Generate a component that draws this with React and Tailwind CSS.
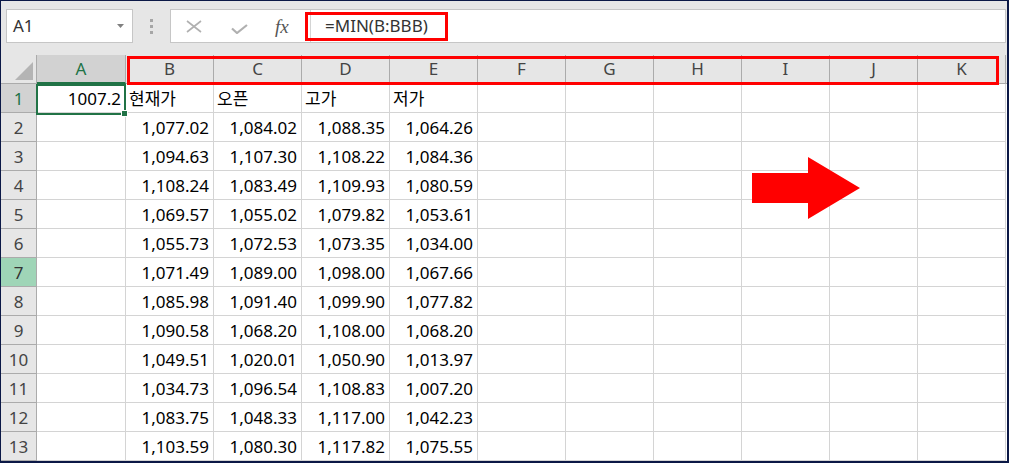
import React from 'react';

const COLS = ['A', 'B', 'C', 'D', 'E', 'F', 'G', 'H', 'I', 'J', 'K'];

const ROWS = [
  ['1,077.02', '1,084.02', '1,088.35', '1,064.26'],
  ['1,094.63', '1,107.30', '1,108.22', '1,084.36'],
  ['1,108.24', '1,083.49', '1,109.93', '1,080.59'],
  ['1,069.57', '1,055.02', '1,079.82', '1,053.61'],
  ['1,055.73', '1,072.53', '1,073.35', '1,034.00'],
  ['1,071.49', '1,089.00', '1,098.00', '1,067.66'],
  ['1,085.98', '1,091.40', '1,099.90', '1,077.82'],
  ['1,090.58', '1,068.20', '1,108.00', '1,068.20'],
  ['1,049.51', '1,020.01', '1,050.90', '1,013.97'],
  ['1,034.73', '1,096.54', '1,108.83', '1,007.20'],
  ['1,083.75', '1,048.33', '1,117.00', '1,042.23'],
  ['1,103.59', '1,080.30', '1,117.82', '1,075.55'],
];

const font = { fontFamily: '"Noto Sans", "Noto Sans CJK KR", sans-serif' };

const Cell = ({ children, right }) => (
  <div className={`h-[29px] border-r border-b border-[#d4d4d4] bg-white text-[17px] text-black leading-[29px] overflow-visible whitespace-nowrap ${right ? 'text-right pr-[4px]' : 'pl-[3px]'}`}>
    {children}
  </div>
);

const RowHead = ({ n, state }) => {
  const cls =
    state === 'sel' ? 'bg-[#d2d2d2] text-[#217346]' :
    state === 'hover' ? 'bg-[#9fd5b7] text-[#333]' :
    'bg-[#e6e6e6] text-[#444]';
  return (
    <div className={`h-[29px] border-r border-b border-[#ababab] text-center text-[17px] leading-[29px] ${cls}`}>
      {n}
    </div>
  );
};

export default function App() {
  return (
    <div className="relative w-[1009px] h-[463px] overflow-hidden bg-[#e6e6e6] border-l border-t border-r-2 border-b-2 border-[#0b1846]" style={font}>
      {/* Toolbar */}
      <div className="h-[54px] flex items-start pt-[8px]">
        <div className="ml-[5px] w-[127px] h-[34px] bg-white border border-[#c6c6c6] flex items-center justify-between pl-[6px] pr-[8px]">
          <span className="text-[17px] text-[#333]">A1</span>
          <svg width="7" height="4" viewBox="0 0 7 4"><polygon points="0,0 7,0 3.5,4" fill="#808080" /></svg>
        </div>
        <div className="w-[37px] h-[34px] flex flex-col items-center justify-center gap-[3px]">
          <div className="w-[3px] h-[3px] bg-[#a6a6a6]" />
          <div className="w-[3px] h-[3px] bg-[#a6a6a6]" />
          <div className="w-[3px] h-[3px] bg-[#a6a6a6]" />
        </div>
        <div className="flex-1 mr-[1px] h-[34px] bg-white border border-[#c6c6c6] flex">
          <div className="w-[140px] flex items-center border-r border-[#d4d4d4]">
            <svg className="ml-[15px]" width="16" height="13" viewBox="0 0 16 13">
              <path d="M1 1 L15 12 M15 1 L1 12" stroke="#b0b0b0" strokeWidth="1.6" fill="none" />
            </svg>
            <svg className="ml-[29px] mt-[6px]" width="17" height="10" viewBox="0 0 17 10">
              <path d="M1 4.5 L6 9 L16 1" stroke="#b0b0b0" strokeWidth="2.2" fill="none" />
            </svg>
            <span className="ml-[27px] text-[19px] italic text-[#555] leading-none" style={{ fontFamily: '"Liberation Serif", serif' }}>fx</span>
          </div>
          <div className="flex-1 flex items-center pl-[14px] text-[17px] text-[#333]">=MIN(B:BBB)</div>
        </div>
      </div>

      {/* Sheet grid */}
      <div className="grid grid-cols-[36px_89px_repeat(10,88px)_1fr]">
        {/* header row */}
        <div className="h-[29px] border-r border-b border-[#ababab] bg-[#e6e6e6] flex items-end justify-end pr-[3px] pb-[3px]">
          <svg width="18" height="18" viewBox="0 0 18 18"><polygon points="18,0 18,18 0,18" fill="#b4b4b4" /></svg>
        </div>
        {COLS.map(c => (
          <div key={c} className={`h-[29px] border-r text-center text-[17px] leading-[28px] ${c === 'A' ? 'bg-[#d2d2d2] text-[#217346] border-b-2 border-b-[#217346] border-r-[#ababab]' : 'bg-[#e6e6e6] text-[#444] border-b border-[#ababab]'}`}>
            {c}
          </div>
        ))}
        <div className="h-[29px] border-b border-[#ababab] bg-[#e6e6e6]" />

        {/* row 1 */}
        <RowHead n={1} state="sel" />
        <Cell right>1007.2</Cell>
        <Cell>현재가</Cell>
        <Cell>오픈</Cell>
        <Cell>고가</Cell>
        <Cell>저가</Cell>
        {COLS.slice(5).map(c => <Cell key={c} />)}
        <div className="h-[29px] bg-white" />

        {ROWS.map((r, i) => (
          <React.Fragment key={i}>
            <RowHead n={i + 2} state={i + 2 === 7 ? 'hover' : ''} />
            <Cell />
            {r.map((v, j) => <Cell key={j} right>{v}</Cell>)}
            {COLS.slice(5).map(c => <Cell key={c} />)}
            <div className="h-[29px] bg-white" />
          </React.Fragment>
        ))}
      </div>

      {/* A1 selection */}
      <div className="absolute left-[35px] top-[83px] w-[90px] h-[31px] border-2 border-[#217346]" />
      <div className="absolute left-[120px] top-[109px] w-[7px] h-[7px] bg-[#217346] border border-white" />

      {/* annotation boxes */}
      <div className="absolute left-[304px] top-[11px] w-[143px] h-[29px] border-[3px] border-[#ff0000]" />
      <div className="absolute left-[126px] top-[55px] w-[872px] h-[29px] border-[3px] border-[#ff0000]" />

      {/* arrow */}
      <svg className="absolute left-[751px] top-[156px]" width="109" height="63" viewBox="0 0 109 63">
        <polygon points="0,16 56,16 56,0 108,31 56,62 56,46 0,46" fill="#ff0000" />
      </svg>
    </div>
  );
}
